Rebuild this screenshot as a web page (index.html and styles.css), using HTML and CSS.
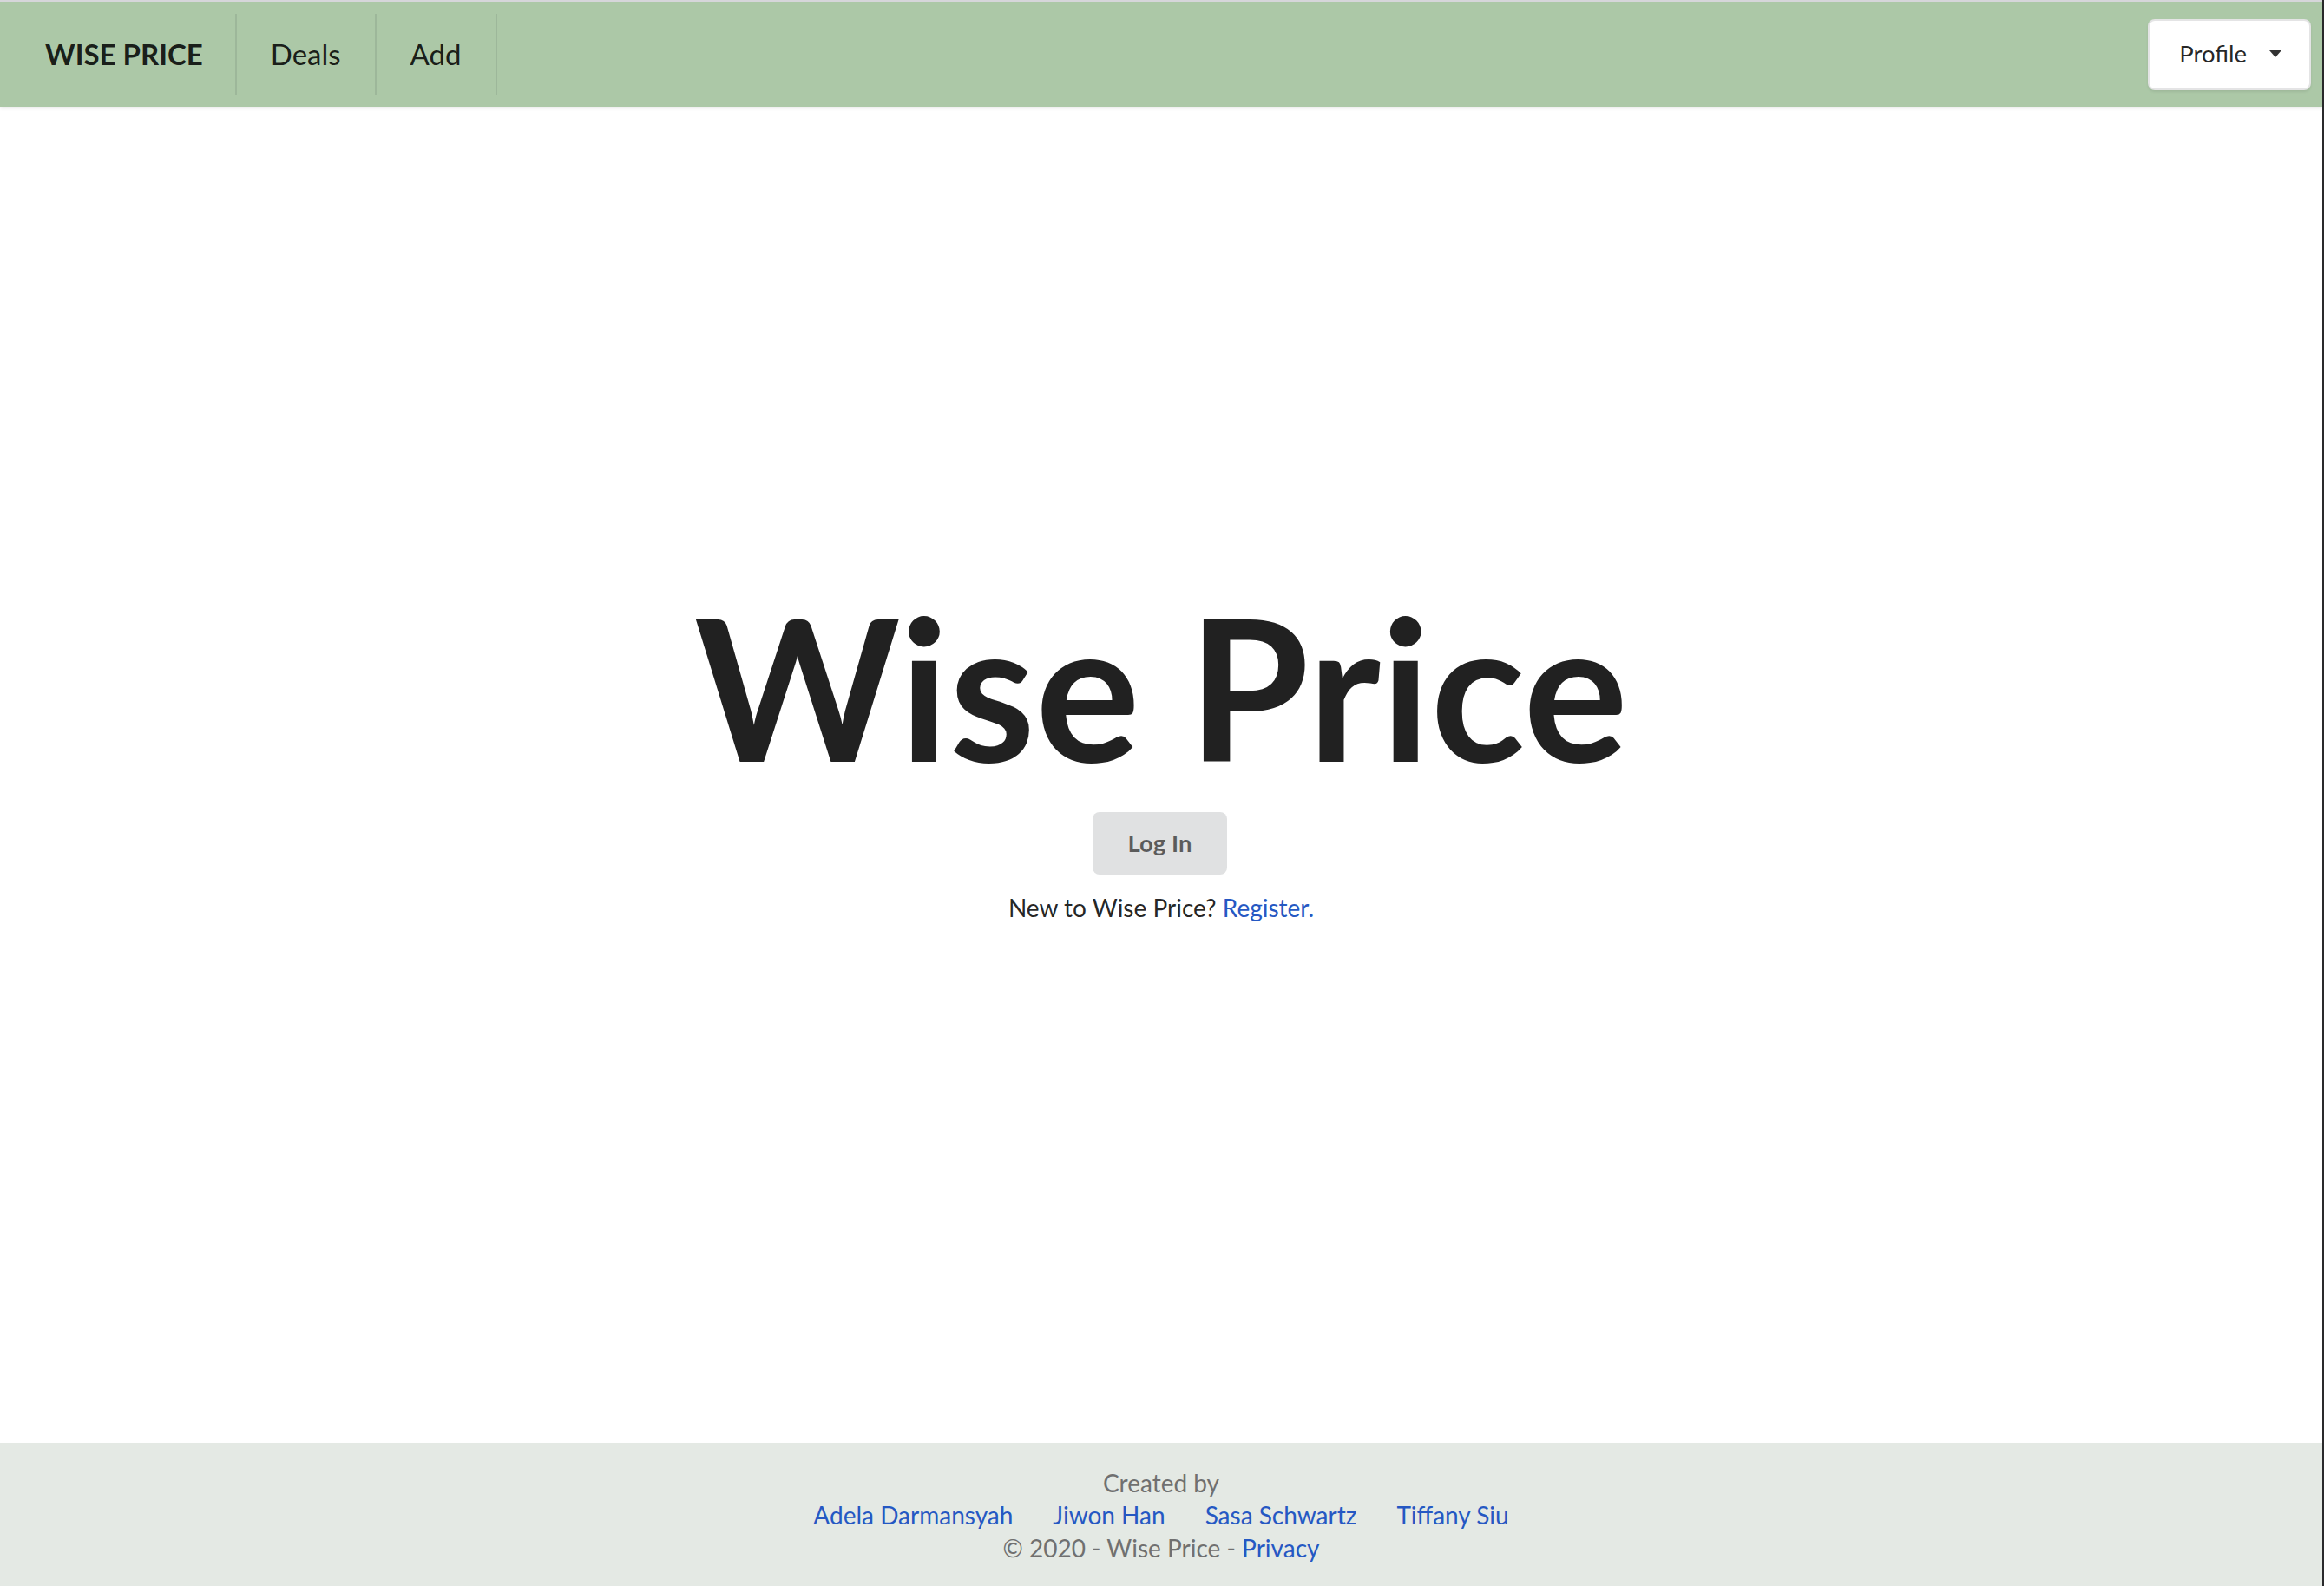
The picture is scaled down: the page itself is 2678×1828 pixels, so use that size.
FILE: index.html
```html
<!DOCTYPE html>
<html lang="en">
<head>
<meta charset="utf-8">
<title>Wise Price</title>
<link rel="stylesheet" href="styles.css">
</head>
<body>
<div class="page">
  <nav class="topbar">
    <div class="menu">
      <a class="item brand" href="#">WISE PRICE</a>
      <a class="item" href="#">Deals</a>
      <a class="item" href="#">Add</a>
    </div>
    <div class="profile">
      <span class="profile-label">Profile</span>
      <span class="caret"></span>
    </div>
  </nav>

  <main class="hero">
    <h1 class="title">Wise Price</h1>
    <button class="login" type="button">Log In</button>
    <p class="register">New to Wise Price? <a href="#">Register.</a></p>
  </main>

  <footer class="footer">
    <div class="footer-line muted">Created by</div>
    <div class="footer-line names">
      <a href="#">Adela Darmansyah</a>
      <a href="#">Jiwon Han</a>
      <a href="#">Sasa Schwartz</a>
      <a href="#">Tiffany Siu</a>
    </div>
    <div class="footer-line muted">© 2020 - Wise Price - <a href="#">Privacy</a></div>
  </footer>
</div>
</body>
</html>
```

FILE: styles.css
```css
html, body {
  margin: 0;
  padding: 0;
  background: #ffffff;
}

body {
  font-family: Lato, "Open Sans", "Liberation Sans", sans-serif;
  color: rgba(0, 0, 0, 0.87);
}

a {
  text-decoration: none;
}

.page {
  height: 100vh;
  display: flex;
  flex-direction: column;
  border-right: 2px solid #2a2a2c;
  box-sizing: border-box;
}

/* ---------- Top bar ---------- */
.topbar {
  flex: 0 0 auto;
  border-top: 2px solid #d6d6da;
  background: #acc8a7;
  height: 121px;
  box-sizing: content-box;
  padding: 0 13px 0 11px;
  display: flex;
  align-items: center;
  justify-content: space-between;
  box-shadow: 0 2px 4px rgba(0, 0, 0, 0.08);
  position: relative;
  z-index: 1;
}

.menu {
  display: flex;
  align-self: stretch;
  padding: 14px 0 13px 0;
}

.item {
  display: flex;
  align-items: center;
  padding: 0 39px 3px 39px;
  font-size: 33px;
  color: rgba(0, 0, 0, 0.87);
  border-right: 2px solid rgba(34, 36, 38, 0.1);
}

.item.brand {
  font-weight: 700;
  padding-left: 41px;
  padding-right: 37px;
}

.profile {
  display: flex;
  align-items: center;
  height: 82px;
  box-sizing: border-box;
  padding: 0 32px 2px 34px;
  background: #ffffff;
  border: 2px solid rgba(34, 36, 38, 0.12);
  border-radius: 8px;
  box-shadow: 0 2px 3px rgba(0, 0, 0, 0.08);
  font-size: 27.5px;
  color: rgba(0, 0, 0, 0.87);
}

.profile-label {
  margin-right: 26px;
}

.caret {
  width: 0;
  height: 0;
  border-left: 7px solid transparent;
  border-right: 7px solid transparent;
  border-top: 8px solid #333333;
}

/* ---------- Hero ---------- */
.hero {
  flex: 1 1 auto;
  display: flex;
  flex-direction: column;
  align-items: center;
  padding-top: 555px;
  box-sizing: border-box;
}

.title {
  margin: 0;
  font-size: 226px;
  line-height: 226px;
  font-weight: 700;
  color: #212121;
  letter-spacing: 0;
}

.login {
  margin-top: 32px;
  margin-right: 3px;
  height: 72px;
  padding: 0 41px;
  border: none;
  border-radius: 8px;
  background: #e0e1e2;
  color: rgba(0, 0, 0, 0.6);
  font-family: Lato, "Open Sans", "Liberation Sans", sans-serif;
  font-size: 27.5px;
  font-weight: 700;
  line-height: 28px;
}

.register {
  margin: 20px 0 0 0;
  font-size: 28px;
  line-height: 37.5px;
  color: rgba(0, 0, 0, 0.87);
}

.register a {
  color: #2558c3;
}

/* ---------- Footer ---------- */
.footer {
  flex: 0 0 auto;
  background: #e4e9e4;
  padding: 28px 0 25px 0;
  display: flex;
  flex-direction: column;
  align-items: center;
  font-size: 28px;
  line-height: 37.5px;
}

.footer-line {
  text-align: center;
}

.muted {
  color: #707070;
}

.footer a {
  color: #2558c3;
}

.names {
  display: flex;
  gap: 46px;
  justify-content: center;
}
```
